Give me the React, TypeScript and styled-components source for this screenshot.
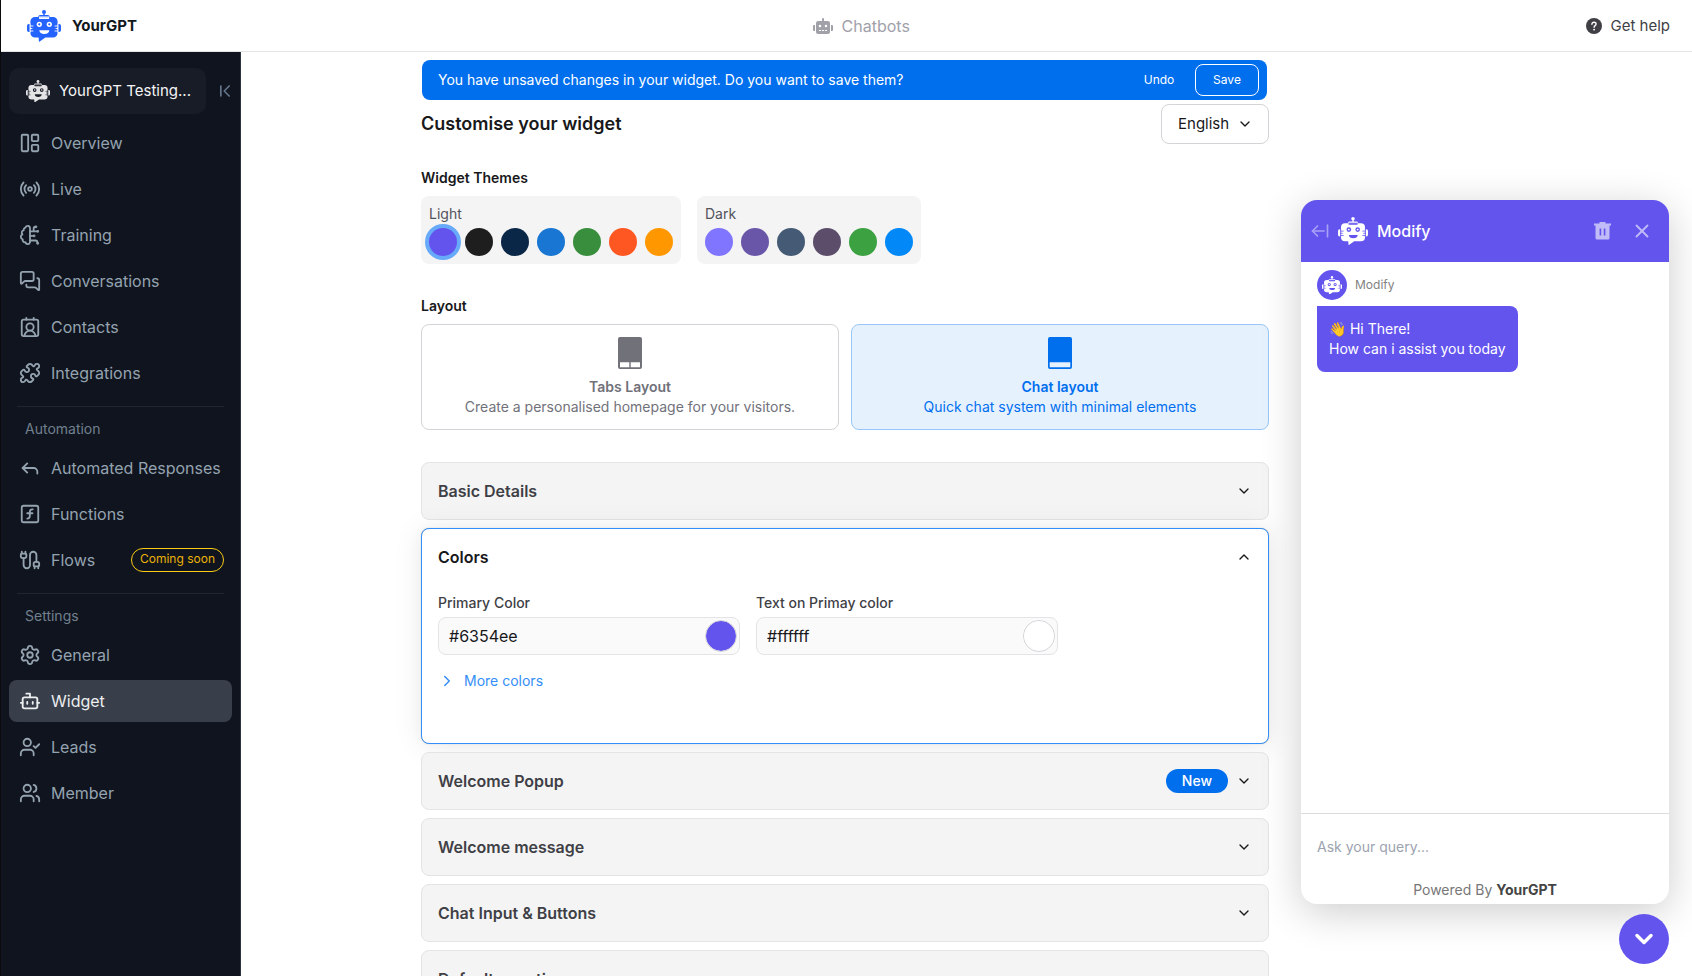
import React, { useState } from "react";
import styled, { createGlobalStyle, css } from "styled-components";
import {
  ArrowLeftFromLine,
  Bot,
  Cable,
  ChevronDown,
  ChevronFirst,
  ChevronRight,
  ChevronsUpDown,
  ChevronUp,
  ContactRound,
  LayoutPanelLeft,
  MessagesSquare,
  Puzzle,
  Radio,
  Reply,
  Settings,
  SquareFunction,
  UserCheck,
  Users,
  X,
} from "lucide-react";
import { FaRobot } from "react-icons/fa";

const GlobalStyle = createGlobalStyle`
  *, *::before, *::after { box-sizing: border-box; }
  body {
    margin: 0;
    background: #fff;
    color: #18181b;
    font-family: Inter, "Liberation Sans", sans-serif;
    font-size: 14px;
    line-height: 20px;
  }
  button, input, select { font: inherit; color: inherit; }
  button { background: none; border: 0; padding: 0; cursor: pointer; }
  h1, h2, h3, p, ul { margin: 0; padding: 0; }
  ul { list-style: none; }
  a { color: inherit; text-decoration: none; }
  svg { flex: none; display: block; }
`;

const Page = styled.div`
  display: flex;
  flex-direction: column;
  height: 100vh;
  border-left: 1px solid #0b0b0d;
  overflow: hidden;
`;

/* ---------- top bar ---------- */

const TopBar = styled.header`
  display: flex;
  flex: none;
  align-items: center;
  justify-content: space-between;
  height: 52px;
  padding: 0 22px 0 26px;
  border-bottom: 1px solid #e4e4e7;
`;

const Brand = styled.a`
  display: flex;
  align-items: center;
  gap: 11px;
  font-size: 15px;
  font-weight: 700;
  color: #11181c;
`;

const TopLink = styled.a<{ $muted?: boolean }>`
  display: flex;
  align-items: center;
  gap: 9px;
  font-size: ${(p) => (p.$muted ? 16 : 15)}px;
  color: ${(p) => (p.$muted ? "#a1a1aa" : "#3f3f46")};
`;

/* ---------- sidebar ---------- */

const Body = styled.div`
  display: flex;
  flex: 1;
  min-height: 0;
`;

const Sidebar = styled.nav`
  flex: none;
  width: 240px;
  padding: 16px 8px;
  background: #10141e;
  border-right: 1px solid #2b3340;
  overflow-y: auto;
  scrollbar-width: none;
`;

const SidebarTop = styled.div`
  display: flex;
  align-items: center;
  gap: 9px;
  margin-bottom: 8px;
`;

const BotPicker = styled.button`
  display: flex;
  flex: none;
  align-items: center;
  gap: 9px;
  width: 197px;
  height: 46px;
  padding-left: 17px;
  border-radius: 10px;
  background: #181c27;
  color: #f4f4f5;
  font-size: 15px;
  white-space: nowrap;
  overflow: hidden;
`;

const BotPickerName = styled.span`
  flex: none;
  width: 134px;
  text-align: left;
`;

const CollapseButton = styled.button`
  color: #64748b;
`;

const NavGroup = styled.ul`
  display: flex;
  flex-direction: column;
  gap: 4px;
`;

const NavHeading = styled.h2`
  margin: 12px 8px 0;
  padding: 12px 8px 8px;
  border-top: 1px solid #20252f;
  font-size: 14px;
  font-weight: 400;
  color: #71808f;
`;

const NavLink = styled.a<{ $active?: boolean }>`
  display: flex;
  align-items: center;
  gap: 10px;
  height: 42px;
  padding: 0 8px 0 10px;
  border-radius: 8px;
  font-size: 16px;
  white-space: nowrap;
  color: ${(p) => (p.$active ? "#eceef0" : "#94a3b0")};
  background: ${(p) => (p.$active ? "#393f4a" : "transparent")};
`;

const SoonBadge = styled.span`
  height: 24px;
  margin-left: auto;
  padding: 0 8px;
  border: 1px solid #facc15;
  border-radius: 12px;
  color: #eab308;
  font-size: 12px;
  line-height: 20px;
`;

/* ---------- main column ---------- */

const Main = styled.main`
  display: flex;
  flex: 1;
  gap: 32px;
  min-width: 0;
  padding-right: 23px;
  overflow: hidden;
`;

const Content = styled.div`
  flex: 0 1 848px;
  min-width: 0;
  margin-left: auto;
  padding-top: 8px;
`;

const Banner = styled.div`
  display: flex;
  align-items: center;
  height: 40px;
  margin: 0 2px 4px 1px;
  padding: 0 8px 0 16px;
  border-radius: 8px;
  background: #006fee;
  color: #fff;
`;

const BannerButton = styled.button<{ $outlined?: boolean }>`
  width: 64px;
  height: 32px;
  border: 1px solid ${(p) => (p.$outlined ? "#fff" : "transparent")};
  border-radius: 8px;
  font-size: 12px;

  &:first-of-type {
    margin: 0 4px 0 auto;
  }
`;

const TitleRow = styled.div`
  display: flex;
  justify-content: space-between;
  height: 40px;
  margin-bottom: 24px;
`;

const Title = styled.h1`
  font-size: 18px;
  font-weight: 600;
  line-height: 40px;
`;

const SelectWrap = styled.label`
  display: grid;
  grid-template-columns: 1fr;
  align-items: center;
  width: 108px;

  > * {
    grid-area: 1 / 1;
  }

  > svg {
    justify-self: end;
    margin-right: 16px;
    pointer-events: none;
  }
`;

const Select = styled.select`
  appearance: none;
  width: 100%;
  height: 40px;
  padding: 0 16px;
  border: 1px solid #d4d4d8;
  border-radius: 8px;
  background: #fff;
  font-size: 15px;
`;

const SectionTitle = styled.h2`
  margin-bottom: 8px;
  font-size: 14px;
  font-weight: 600;
`;

const Themes = styled.div`
  display: flex;
  gap: 16px;
  margin-bottom: 32px;
`;

const ThemeGroup = styled.fieldset`
  display: flex;
  flex-direction: column;
  gap: 4px;
  min-width: 0;
  margin: 0;
  padding: 8px;
  border: 0;
  border-radius: 8px;
  background: #f4f4f4;
  color: #52525b;
`;

const ThemeRow = styled.div`
  display: flex;
  gap: 8px;
`;

const ThemeSwatch = styled.input<{ $color: string }>`
  appearance: none;
  width: 28px;
  height: 28px;
  margin: 0;
  border-radius: 50%;
  background: ${(p) => p.$color};
  cursor: pointer;

  &:checked {
    box-shadow: 0 0 0 4px #66aaf9;
  }
`;

const Layouts = styled.div`
  display: grid;
  grid-template-columns: 1fr 1fr;
  gap: 12px;
  margin-bottom: 32px;
`;

const LayoutCard = styled.button<{ $active?: boolean }>`
  display: flex;
  flex-direction: column;
  align-items: center;
  padding: 12px;
  border: 1px solid ${(p) => (p.$active ? "#99c7fb" : "#d4d4d8")};
  border-radius: 8px;
  background: ${(p) => (p.$active ? "#e6f1fe" : "#fff")};
  color: ${(p) => (p.$active ? "#006fee" : "#71717a")};

  > svg {
    margin-bottom: 8px;
  }
`;

const CardTitle = styled.span`
  font-weight: 600;
`;

/* ---------- accordion ---------- */

const Accordion = styled.div`
  display: flex;
  flex-direction: column;
  gap: 8px;
`;

const Panel = styled.section<{ $open?: boolean }>`
  position: relative;
  border: 1px solid #e4e4e7;
  border-radius: 8px;
  background: #f4f4f4;
  color: #3f3f46;

  ${(p) =>
    p.$open &&
    css`
      border-color: #338ef7;
      background: #fff;
      color: #18181b;
      box-shadow: 0 0 15px rgba(0, 0, 0, 0.03), 0 2px 30px rgba(0, 0, 0, 0.08),
        0 0 1px rgba(0, 0, 0, 0.3);
    `}
`;

const PanelHeader = styled.button`
  display: flex;
  align-items: center;
  gap: 8px;
  width: 100%;
  height: 56px;
  padding: 0 16px;
  text-align: left;

  > svg {
    color: #18181b;
  }
`;

const PanelTitle = styled.span`
  flex: 1;
  font-size: 16px;
  font-weight: 600;
`;

const NewBadge = styled.span`
  padding: 2px 16px;
  border-radius: 12px;
  background: #006fee;
  color: #fff;
  font-weight: 500;
`;

const PanelBody = styled.div`
  padding: 8px 16px 52px;
`;

const Fields = styled.div`
  display: flex;
  gap: 16px;
  margin-bottom: 16px;
`;

const Field = styled.div`
  display: flex;
  flex-direction: column;
  gap: 4px;
  flex: 0 1 302px;
  min-width: 0;
  font-weight: 500;
  color: #3f3f46;
`;

const ColorBox = styled.div`
  display: flex;
  align-items: center;
  height: 38px;
  padding: 0 2px 0 10px;
  border: 1px solid #e4e4e7;
  border-radius: 8px;
  background: #fafafa;
`;

const ColorText = styled.input`
  flex: 1;
  min-width: 0;
  padding: 0;
  border: 0;
  outline: 0;
  background: none;
  color: #18181b;
  font-size: 16px;
  font-weight: 400;
`;

const ColorPick = styled.input`
  appearance: none;
  flex: none;
  width: 32px;
  height: 32px;
  padding: 0;
  border: 1px solid #d4d4d8;
  border-radius: 50%;
  overflow: hidden;
  background: none;

  &::-webkit-color-swatch-wrapper {
    padding: 0;
  }

  &::-webkit-color-swatch {
    border: 0;
    border-radius: 50%;
  }
`;

const MoreColors = styled.button`
  display: flex;
  align-items: center;
  gap: 8px;
  color: #338ef7;
`;

/* ---------- chat preview ---------- */

const Preview = styled.aside`
  position: relative;
  display: flex;
  flex: none;
  flex-direction: column;
  align-items: flex-end;
  justify-content: flex-end;
  gap: 10px;
  width: 368px;
  padding-bottom: 12px;
`;

const ChatWindow = styled.section`
  display: flex;
  flex-direction: column;
  flex: 0 1 704px;
  width: 100%;
  min-height: 0;
  border-radius: 16px;
  background: #fff;
  box-shadow: 0 8px 40px rgba(0, 0, 0, 0.2);
`;

const ChatHeader = styled.header`
  display: flex;
  flex: none;
  align-items: center;
  height: 62px;
  padding: 0 16px 0 9px;
  border-radius: 16px 16px 0 0;
  background: #6354ee;
  color: #fff;
`;

const ChatTitle = styled.h2`
  flex: 1;
  margin-left: 9px;
  font-size: 16px;
  font-weight: 500;
`;

const ChatIconButton = styled.button`
  display: flex;
  margin-right: 8px;
  color: #c1bbf8;

  & + & {
    margin-left: 12px;
    margin-right: 0;
  }
`;

const Messages = styled.div`
  flex: 1;
  min-height: 0;
  padding: 8px 16px;
  overflow: hidden;
`;

const Sender = styled.div`
  display: flex;
  align-items: center;
  gap: 8px;
  margin-bottom: 6px;
  color: #838383;
  font-size: 12px;
`;

const Avatar = styled.span`
  display: flex;
  align-items: center;
  justify-content: center;
  width: 30px;
  height: 30px;
  border-radius: 50%;
  background: #6354ee;
`;

const Bubble = styled.p`
  width: fit-content;
  padding: 13px 12px;
  border-radius: 0 8px 8px 8px;
  background: #6354ee;
  color: #fff;
`;

const Composer = styled.footer`
  flex: none;
  padding: 16px 16px 4px;
  border-top: 1px solid #dcdcdf;
`;

const QueryInput = styled.input`
  display: block;
  width: 100%;
  height: 32px;
  margin-bottom: 18px;
  padding: 0;
  border: 0;
  outline: 0;
  background: none;

  &::placeholder {
    color: #9ca3af;
    opacity: 1;
  }
`;

const Powered = styled.p`
  text-align: center;
  color: #777;

  strong {
    color: #444;
  }
`;

const Launcher = styled.button`
  display: flex;
  flex: none;
  align-items: center;
  justify-content: center;
  width: 50px;
  height: 50px;
  border-radius: 50%;
  background: #6354ee;
  color: #fff;
`;

/* ---------- drawings ---------- */

type RobotProps = { width: number; color: string; face: string };

function Robot({ width, color, face }: RobotProps) {
  return (
    <svg width={width} height={(width * 32) / 34} viewBox="0 0 34 32" aria-hidden="true">
      <circle cx="17" cy="2" r="2" fill={color} />
      <path d="M16.3 3h1.5v3h-1.5z" fill={color} />
      <path d="M8 7h3.2c.2-1.300.8-2 2-2h7.600c1.200 0 1.800.7 2 2H26a4.600 4.600 0 0 1 4.600 4.600v11.400a4.600 4.600 0 0 1-4.600 4.600h-7.600L12 32l-.4-4.400H8a4.600 4.600 0 0 1-4.600-4.600V11.600A4.600 4.600 0 0 1 8 7z" fill={color} />
      <path d="M12 6.400h10.200v1.900a.6.600 0 0 1-.6.600h-9a.6.600 0 0 1-.6-.6z" fill={face} />
      <path d="M12.600 7.200h9v.7h-9z" fill={color} opacity=".25" />
      <circle cx="12.300" cy="14.300" r="2.600" fill={face} />
      <circle cx="22.300" cy="14.300" r="2.600" fill={face} />
      <circle cx="12.300" cy="14.300" r="1.100" fill={color} />
      <circle cx="22.300" cy="14.300" r="1.100" fill={color} />
      <path d="M12.300 20.300h10c0 2.300-2 3.700-5 3.700s-5-1.400-5-3.700z" fill={face} />
      <path d="M3 14H1.800A1.800 1.800 0 0 0 0 15.800v4.400A1.800 1.800 0 0 0 1.800 22H3zM31 14h1.200a1.800 1.800 0 0 1 1.800 1.800v4.400a1.800 1.800 0 0 1-1.800 1.800H31z" fill={color} />
      <path d="M3 13.500v9M31 13.500v9M3 16h3.400M3 18.500h2.400M3 21h3.400M31 16h-3.400M31 18.500h-2.400M31 21h-3.400" stroke={face} strokeWidth=".9" fill="none" />
    </svg>
  );
}

function BrainHalf({ size = 22, strokeWidth = 2 }: { size?: number; strokeWidth?: number }) {
  return (
    <svg width={size} height={size} viewBox="0 0 24 24" fill="none" stroke="currentColor" strokeWidth={strokeWidth} strokeLinecap="round" strokeLinejoin="round" aria-hidden="true">
      <path d="M12 4.500a2.500 2.500 0 0 0-4.960-.46 2.500 2.500 0 0 0-1.980 3 2.500 2.500 0 0 0-1.320 4.240 3 3 0 0 0 .34 5.580 2.500 2.500 0 0 0 2.960 3.080 2.500 2.500 0 0 0 4.910.05L12 20V4.500Z" />
      <path d="M16 8V5c0-1.100.9-2 2-2M12 13h4M12 18h6a2 2 0 0 1 2 2v1M12 8h8" />
      <circle cx="20.500" cy="8" r=".5" />
      <circle cx="16.500" cy="13" r=".5" />
      <circle cx="20.500" cy="21" r=".5" />
      <circle cx="18.500" cy="3" r=".5" />
    </svg>
  );
}

function HelpIcon() {
  return (
    <svg width="16" height="16" viewBox="0 0 16 16" aria-hidden="true">
      <circle cx="8" cy="8" r="8" fill="#3f3f46" />
      <path d="M5.900 6.300C5.900 5 6.800 4.200 8 4.200s2.100.8 2.100 1.900c0 1.600-2 1.500-2 3.100" fill="none" stroke="#fff" strokeWidth="1.400" strokeLinecap="round" />
      <circle cx="8.100" cy="11.600" r=".95" fill="#fff" />
    </svg>
  );
}

function TrashIcon() {
  return (
    <svg width="17" height="18" viewBox="0 0 17 18" aria-hidden="true">
      <path d="M5.500 0h6v1.500H17v2h-1.500V16a1.500 1.500 0 0 1-1.500 1.500H3A1.500 1.500 0 0 1 1.500 16V3.500H0v-2h5.500zM5.600 6.500v7h1.600v-7zm4.200 0v7h1.600v-7z" fill="currentColor" fillRule="evenodd" />
    </svg>
  );
}

function DeviceIcon({ tabs }: { tabs?: boolean }) {
  return (
    <svg width="24" height="32" viewBox="0 0 24 32" fill="currentColor" aria-hidden="true">
      <path
        fillRule="evenodd"
        d={
          tabs
            ? "M2 0h20a2 2 0 0 1 2 2v28a2 2 0 0 1-2 2H2a2 2 0 0 1-2-2V2a2 2 0 0 1 2-2zM2 25.300V30.300h9.300v-5zm10.700 0V30.300H22v-5z"
            : "M2 0h20a2 2 0 0 1 2 2v28a2 2 0 0 1-2 2H2a2 2 0 0 1-2-2V2a2 2 0 0 1 2-2zM1.700 25.300V30.300h20.600v-5z"
        }
      />
    </svg>
  );
}

/* ---------- data ---------- */

type NavItem = { label: string; icon: React.ElementType; soon?: boolean; active?: boolean };

const navGroups: { heading?: string; items: NavItem[] }[] = [
  {
    items: [
      { label: "Overview", icon: LayoutPanelLeft },
      { label: "Live", icon: Radio },
      { label: "Training", icon: BrainHalf },
      { label: "Conversations", icon: MessagesSquare },
      { label: "Contacts", icon: ContactRound },
      { label: "Integrations", icon: Puzzle },
    ],
  },
  {
    heading: "Automation",
    items: [
      { label: "Automated Responses", icon: Reply },
      { label: "Functions", icon: SquareFunction },
      { label: "Flows", icon: Cable, soon: true },
    ],
  },
  {
    heading: "Settings",
    items: [
      { label: "General", icon: Settings },
      { label: "Widget", icon: Bot, active: true },
      { label: "Leads", icon: UserCheck },
      { label: "Member", icon: Users },
    ],
  },
];

const themes = [
  { name: "Light", colors: ["#6354ee", "#1e1e1e", "#0a2747", "#1976d2", "#388e3c", "#ff5722", "#ff9800"] },
  { name: "Dark", colors: ["#8075ff", "#6a56a8", "#455a75", "#5c4d6b", "#3ba141", "#0288f7"] },
];

const panels = [
  { title: "Basic Details" },
  { title: "Colors" },
  { title: "Welcome Popup", isNew: true },
  { title: "Welcome message" },
  { title: "Chat Input & Buttons" },
  { title: "Default questions" },
];

function ColorField({ id, label, initial }: { id: string; label: string; initial: string }) {
  const [value, setValue] = useState(initial);
  return (
    <Field>
      <label htmlFor={id}>{label}</label>
      <ColorBox>
        <ColorText id={id} value={value} onChange={(e) => setValue(e.target.value)} />
        <ColorPick type="color" aria-label={`${label} picker`} value={value} onChange={(e) => setValue(e.target.value)} />
      </ColorBox>
    </Field>
  );
}

export default function App() {
  const [theme, setTheme] = useState("#6354ee");
  const [layout, setLayout] = useState("chat");
  const [open, setOpen] = useState("Colors");

  return (
    <>
      <GlobalStyle />
      <Page>
        <TopBar>
          <Brand href="#home">
            <Robot width={34} color="#2563ff" face="#fff" />
            YourGPT
          </Brand>
          <TopLink href="#chatbots" $muted>
            <FaRobot size={20} />
            Chatbots
          </TopLink>
          <TopLink href="#help">
            <HelpIcon />
            Get help
          </TopLink>
        </TopBar>
        <Body>
          <Sidebar>
            <SidebarTop>
              <BotPicker>
                <Robot width={24} color="#e4e4e7" face="#181c27" />
                <BotPickerName>YourGPT Testing...</BotPickerName>
                <ChevronsUpDown size={16} />
              </BotPicker>
              <CollapseButton aria-label="Collapse sidebar">
                <ChevronFirst size={20} strokeWidth={2} />
              </CollapseButton>
            </SidebarTop>
            {navGroups.map((group) => (
              <React.Fragment key={group.heading ?? "main"}>
                {group.heading && <NavHeading>{group.heading}</NavHeading>}
                <NavGroup>
                  {group.items.map(({ label, icon: Icon, soon, active }) => (
                    <li key={label}>
                      <NavLink href={`#${label}`} $active={active}>
                        <Icon size={22} strokeWidth={2} />
                        {label}
                        {soon && <SoonBadge>Coming soon</SoonBadge>}
                      </NavLink>
                    </li>
                  ))}
                </NavGroup>
              </React.Fragment>
            ))}
          </Sidebar>
          <Main>
            <Content>
              <Banner>
                You have unsaved changes in your widget. Do you want to save them?
                <BannerButton>Undo</BannerButton>
                <BannerButton $outlined>Save</BannerButton>
              </Banner>
              <TitleRow>
                <Title>Customise your widget</Title>
                <SelectWrap>
                  <Select aria-label="Language" defaultValue="English">
                    <option>English</option>
                  </Select>
                  <ChevronDown size={16} />
                </SelectWrap>
              </TitleRow>
              <SectionTitle>Widget Themes</SectionTitle>
              <Themes>
                {themes.map((group) => (
                  <ThemeGroup key={group.name} aria-label={group.name}>
                    <span>{group.name}</span>
                    <ThemeRow>
                      {group.colors.map((color) => (
                        <ThemeSwatch
                          key={color}
                          type="radio"
                          name="theme"
                          aria-label={`${group.name} ${color}`}
                          $color={color}
                          checked={theme === color}
                          onChange={() => setTheme(color)}
                        />
                      ))}
                    </ThemeRow>
                  </ThemeGroup>
                ))}
              </Themes>
              <SectionTitle>Layout</SectionTitle>
              <Layouts>
                <LayoutCard $active={layout === "tabs"} aria-pressed={layout === "tabs"} onClick={() => setLayout("tabs")}>
                  <DeviceIcon tabs />
                  <CardTitle>Tabs Layout</CardTitle>
                  <span>Create a personalised homepage for your visitors.</span>
                </LayoutCard>
                <LayoutCard $active={layout === "chat"} aria-pressed={layout === "chat"} onClick={() => setLayout("chat")}>
                  <DeviceIcon />
                  <CardTitle>Chat layout</CardTitle>
                  <span>Quick chat system with minimal elements</span>
                </LayoutCard>
              </Layouts>
              <Accordion>
                {panels.map(({ title, isNew }) => {
                  const isOpen = open === title;
                  return (
                    <Panel key={title} $open={isOpen}>
                      <PanelHeader aria-expanded={isOpen} onClick={() => setOpen(isOpen ? "" : title)}>
                        <PanelTitle>{title}</PanelTitle>
                        {isNew && <NewBadge>New</NewBadge>}
                        {isOpen ? <ChevronUp size={16} /> : <ChevronDown size={16} />}
                      </PanelHeader>
                      {isOpen && title === "Colors" && (
                        <PanelBody>
                          <Fields>
                            <ColorField id="primary-color" label="Primary Color" initial="#6354ee" />
                            <ColorField id="text-color" label="Text on Primay color" initial="#ffffff" />
                          </Fields>
                          <MoreColors>
                            <ChevronRight size={18} />
                            More colors
                          </MoreColors>
                        </PanelBody>
                      )}
                    </Panel>
                  );
                })}
              </Accordion>
            </Content>
            <Preview>
              <ChatWindow>
                <ChatHeader>
                  <ChatIconButton aria-label="Back">
                    <ArrowLeftFromLine size={20} strokeWidth={2} opacity={0.75} />
                  </ChatIconButton>
                  <Robot width={30} color="#fff" face="#6354ee" />
                  <ChatTitle>Modify</ChatTitle>
                  <ChatIconButton aria-label="Clear chat">
                    <TrashIcon />
                  </ChatIconButton>
                  <ChatIconButton aria-label="Close chat">
                    <X size={22} strokeWidth={2} />
                  </ChatIconButton>
                </ChatHeader>
                <Messages>
                  <Sender>
                    <Avatar>
                      <Robot width={20} color="#fff" face="#6354ee" />
                    </Avatar>
                    Modify
                  </Sender>
                  <Bubble>
                    👋 Hi There!
                    <br />
                    How can i assist you today
                  </Bubble>
                </Messages>
                <Composer>
                  <QueryInput aria-label="Your query" placeholder="Ask your query..." />
                  <Powered>
                    Powered By <strong>YourGPT</strong>
                  </Powered>
                </Composer>
              </ChatWindow>
              <Launcher aria-label="Close widget">
                <ChevronDown size={28} strokeWidth={3} />
              </Launcher>
            </Preview>
          </Main>
        </Body>
      </Page>
    </>
  );
}
